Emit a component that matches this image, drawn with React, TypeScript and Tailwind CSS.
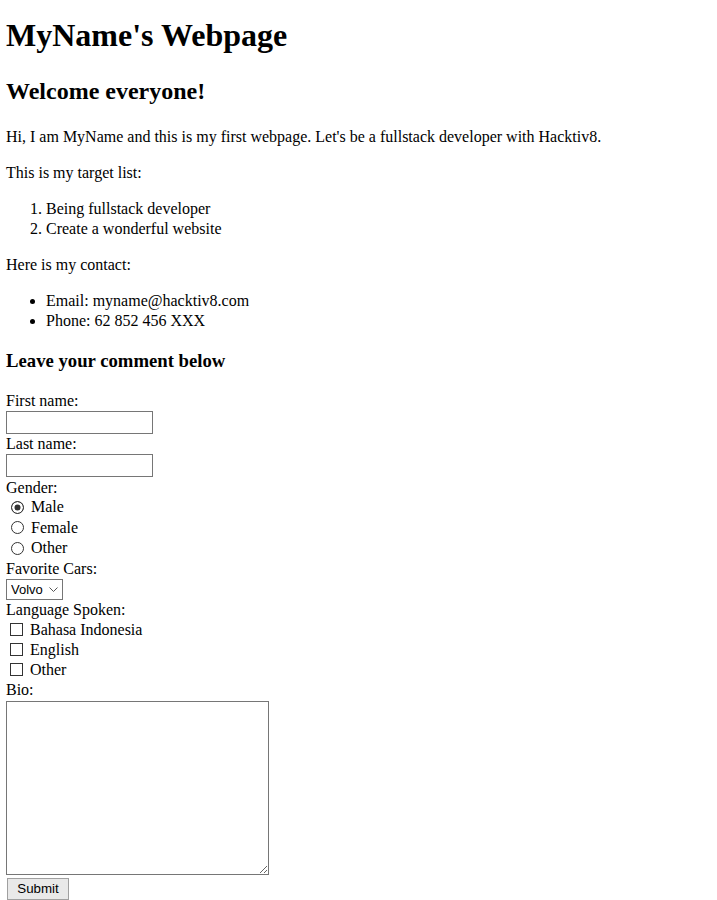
import React from "react";

const serif = "font-['Liberation_Serif','Times_New_Roman',serif]";
const sans = "font-['Liberation_Sans',Arial,sans-serif]";

function Radio({ label, checked }: { label: string; checked?: boolean }) {
  return (
    <label className="flex h-[20.5px] items-center">
      <input
        type="radio"
        name="gender"
        defaultChecked={checked}
        className="ml-[5px] mr-[7px] h-[13px] w-[13px] appearance-none rounded-full border border-[#333333] bg-white checked:bg-[#333333] checked:shadow-[inset_0_0_0_2.5px_white]"
      />
      {label}
    </label>
  );
}

function Check({ label }: { label: string }) {
  return (
    <label className="flex h-[20px] items-center">
      <input
        type="checkbox"
        className="ml-[4px] mr-[7px] h-[13px] w-[13px] appearance-none border border-[#333333] bg-white"
      />
      {label}
    </label>
  );
}

export default function App() {
  return (
    <div className={`${serif} bg-white px-[6px] pt-[17px] text-[16px] leading-[20px] text-black`}>
      <h1 className="text-[32px] font-bold leading-[37px]">MyName's Webpage</h1>
      <h2 className="mt-[23px] text-[24px] font-bold leading-[28px]">Welcome everyone!</h2>
      <p className="mt-[22px]">
        Hi, I am MyName and this is my first webpage. Let's be a fullstack developer with Hacktiv8.
      </p>
      <p className="mt-4">This is my target list:</p>
      <ol className="mt-4 list-decimal pl-10">
        <li>Being fullstack developer</li>
        <li>Create a wonderful website</li>
      </ol>
      <p className="mt-4">Here is my contact:</p>
      <ul className="mt-4 list-disc pl-10">
        <li>Email: myname@hacktiv8.com</li>
        <li>Phone: 62 852 456 XXX</li>
      </ul>
      <h3 className="mt-[19px] text-[18.72px] font-bold leading-[22px]">Leave your comment below</h3>

      <form className="mt-[19px] flex flex-col items-start">
        <label className="h-[20px]">First name:</label>
        <input
          type="text"
          className="h-[23px] w-[147px] border border-[#767676] bg-white px-[2px] text-[13px]"
        />
        <label className="h-[20px]">Last name:</label>
        <input
          type="text"
          className="h-[23px] w-[147px] border border-[#767676] bg-white px-[2px] text-[13px]"
        />
        <div className="mt-px h-[19px]">Gender:</div>
        <Radio label="Male" checked />
        <Radio label="Female" />
        <Radio label="Other" />
        <div className="h-[20px]">Favorite Cars:</div>
        <div className="relative h-[21px] w-[57px]">
          <select
            className={`${sans} h-full w-full appearance-none border border-[#767676] bg-white pl-[4px] text-[13px] leading-[19px]`}
          >
            <option>Volvo</option>
            <option>Saab</option>
            <option>Mercedes</option>
            <option>Audi</option>
          </select>
          <svg
            className="pointer-events-none absolute right-[5px] top-[8px]"
            width="9"
            height="5"
            viewBox="0 0 9 5"
          >
            <path d="M0.5 0.5 L4.5 4.5 L8.5 0.5" fill="none" stroke="#555" strokeWidth="1" />
          </svg>
        </div>
        <div className="h-[20px]">Language Spoken:</div>
        <Check label="Bahasa Indonesia" />
        <Check label="English" />
        <Check label="Other" />
        <div className="h-[21px]">Bio:</div>
        <textarea className="h-[174px] w-[263px] border border-[#767676] bg-white" />
        <button
          type="button"
          className={`${sans} ml-px mt-[3px] h-[22px] w-[62px] border border-[#a0a0a0] bg-[#e9e9e9] text-[13.33px]`}
        >
          Submit
        </button>
      </form>
    </div>
  );
}
